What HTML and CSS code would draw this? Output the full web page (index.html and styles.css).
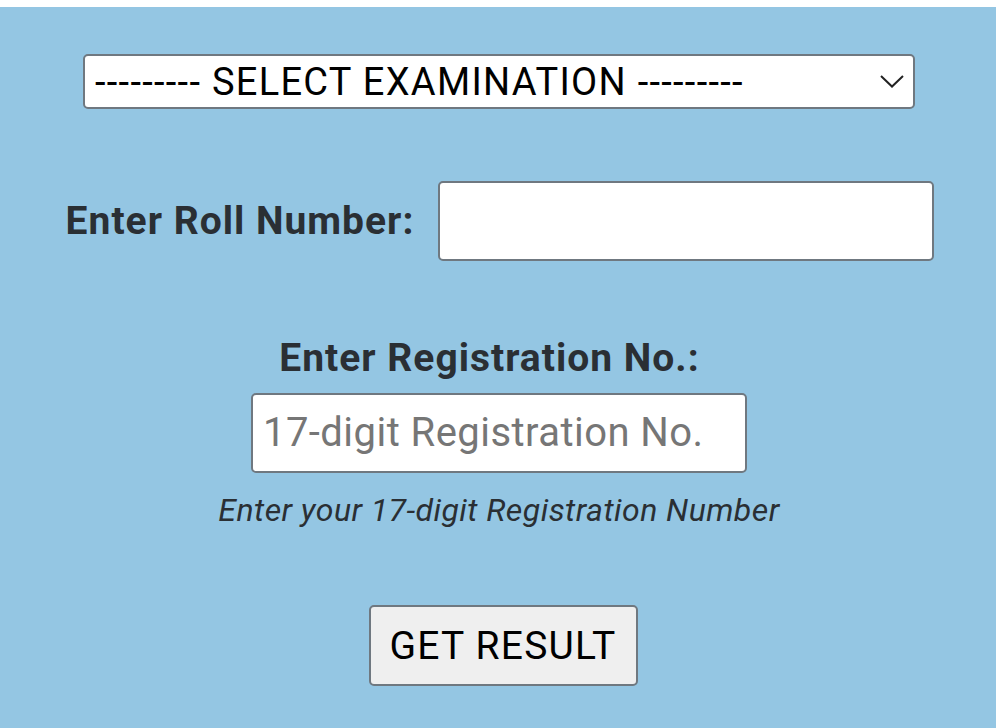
FILE: index.html
```html
<!DOCTYPE html>
<html lang="en">
<head>
<meta charset="utf-8">
<title>Result</title>
<link rel="stylesheet" href="styles.css">
</head>
<body>
<main class="panel">
  <div class="select-wrap">
    <select class="exam-select">
      <option>--------- SELECT EXAMINATION ---------</option>
    </select>
    <svg class="chevron" width="24" height="13" viewBox="0 0 24 13"><polyline points="1,1 12,11.5 23,1" fill="none" stroke="#222" stroke-width="2"/></svg>
  </div>

  <div class="roll-row">
    <label class="label" for="roll">Enter Roll Number:</label>
    <input id="roll" class="field roll-field" type="text">
  </div>

  <label class="label reg-label" for="reg">Enter Registration No.:</label>
  <input id="reg" class="field reg-field" type="text" placeholder="17-digit Registration No.">
  <p class="hint">Enter your 17-digit Registration Number</p>

  <button class="submit" type="button">GET RESULT</button>
</main>
</body>
</html>
```
FILE: styles.css
```css
html, body {
  margin: 0;
  padding: 0;
  background: #ffffff;
}
body {
  padding-top: 7px;
  font-family: Roboto, "Noto Sans", sans-serif;
}
.panel {
  background: #94c6e3;
  min-height: 721px;
  box-sizing: border-box;
  display: flex;
  flex-direction: column;
  align-items: center;
  padding-top: 47px;
  padding-left: 2px;
}
.select-wrap {
  position: relative;
  width: 832px;
  height: 55px;
}
.exam-select {
  appearance: none;
  -webkit-appearance: none;
  width: 100%;
  height: 100%;
  box-sizing: border-box;
  border: 2px solid #6f7880;
  border-radius: 5px;
  background: #ffffff;
  color: #000;
  font-family: Roboto, sans-serif;
  font-size: 38px;
  letter-spacing: 1.3px;
  padding: 0 0 0 10px;
  margin: 0;
}
.chevron {
  position: absolute;
  right: 11px;
  top: 21px;
  pointer-events: none;
}
.roll-row {
  display: flex;
  align-items: center;
  gap: 24px;
  margin-top: 72px;
  margin-left: 2px;
}
.label {
  font-weight: 700;
  font-size: 39px;
  letter-spacing: 1px;
  color: #2a2f34;
  line-height: 1.2;
}
.field {
  box-sizing: border-box;
  height: 80px;
  border: 2px solid #6f7880;
  border-radius: 5px;
  background: #ffffff;
  font-family: Roboto, sans-serif;
  font-size: 40px;
  letter-spacing: 0.45px;
  padding: 0 10px;
  margin: 0;
}
.roll-field {
  width: 496px;
}
.reg-label {
  margin-top: 74px;
  margin-left: -19px;
}
.reg-field {
  width: 496px;
  margin-top: 11px;
}
.reg-field::placeholder {
  color: #767676;
}
.hint {
  margin: 18px 0 0;
  font-style: italic;
  font-size: 32px;
  letter-spacing: 0.45px;
  color: #2a2f34;
  line-height: 1.2;
}
.submit {
  margin-top: 76px;
  margin-left: 8px;
  box-sizing: border-box;
  width: 269px;
  height: 81px;
  border: 2px solid #6f7880;
  border-radius: 5px;
  background: #efefef;
  color: #000;
  font-family: Roboto, sans-serif;
  font-size: 39px;
  letter-spacing: 1.2px;
  padding: 0;
}
```
